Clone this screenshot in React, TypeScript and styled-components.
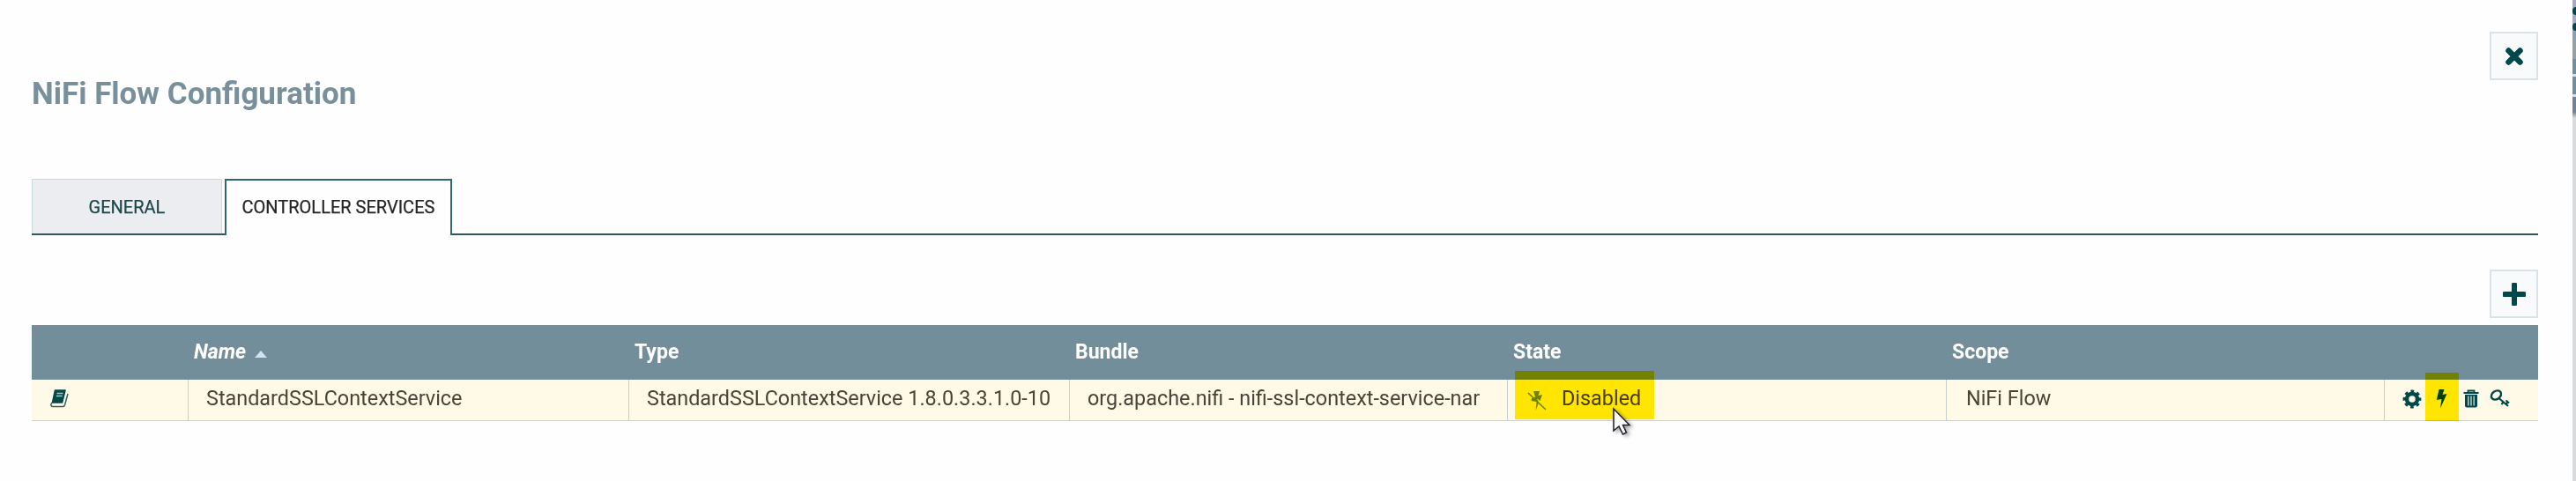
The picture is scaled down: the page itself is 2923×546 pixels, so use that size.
import React from 'react';
import styled, { createGlobalStyle, css } from 'styled-components';

const Global = createGlobalStyle`
  * { box-sizing: border-box; }
  body { margin: 0; background: #fefefe; font-family: Roboto, "Liberation Sans", sans-serif; }
`;

const Page = styled.div`
  position: relative;
  width: 2923px;
  height: 546px;
  overflow: hidden;
  display: flex;
`;

const Dialog = styled.main`
  flex: 1;
  padding: 36px 39px 0 36px;
  display: flex;
  flex-direction: column;
`;

const TitleBar = styled.header`
  display: flex;
  justify-content: space-between;
  align-items: flex-start;
  height: 167px;
`;

const Title = styled.h1`
  margin: 50px 0 0;
  font-size: 35px;
  line-height: 42px;
  font-weight: 700;
  color: #788f9c;
  white-space: nowrap;
`;

const IconButton = styled.button`
  width: 55px;
  height: 55px;
  padding: 0;
  display: flex;
  align-items: center;
  justify-content: center;
  background: #f9fafb;
  border: 2px solid #dae3e6;
  color: #004849;
`;

const Tabs = styled.nav`
  display: flex;
  gap: 3px;
  height: 64px;
  border-bottom: 2px solid #33565b;
`;

const Tab = styled.div<{ $active?: boolean; $width: number }>`
  width: ${p => p.$width}px;
  height: 62px;
  line-height: 63px;
  text-align: center;
  font-size: 20px;
  white-space: nowrap;
  background: #ebedf0;
  border: 1px solid #c9d9dd;
  border-bottom: 0;
  color: #1f484b;
  -webkit-text-stroke: 0.25px currentColor;
  ${p => p.$active && css`
    height: 64px;
    line-height: 61px;
    background: #fefefe;
    border: 2px solid #33666a;
    border-bottom: 0;
    color: #262626;
  `}
`;

const Toolbar = styled.div`
  display: flex;
  justify-content: flex-end;
  padding: 39px 0 8px;
`;

const columns = '178px 500px 500px 497px 498px 497px 174px';

const HeadRow = styled.div`
  display: grid;
  grid-template-columns: ${columns};
  height: 62px;
  background: #728e9b;
  color: #fff;
`;

const HeadCell = styled.div<{ $sorted?: boolean }>`
  display: flex;
  align-items: center;
  gap: 10px;
  padding: 0 0 0 6px;
  font-size: 23px;
  font-weight: 700;
  line-height: 62px;
  font-style: ${p => (p.$sorted ? 'italic' : 'normal')};
`;

const SortArrow = styled.span`
  margin-top: 4px;
  border: 7px solid transparent;
  border-top: 0;
  border-bottom: 8px solid #cfe3f3;
`;

const Row = styled.div`
  display: grid;
  grid-template-columns: ${columns};
  height: 47px;
  background: #fffae8;
  border-bottom: 1px solid #c7d2d7;
`;

const Cell = styled.div<{ $pad?: number }>`
  display: flex;
  align-items: center;
  padding: 0 0 4px ${p => p.$pad ?? 20}px;
  border-right: 1px solid #c7cdcd;
  font-size: 23.4px;
  color: #4a4338;
  white-space: nowrap;
`;

const StateIcon = styled.span`
  display: flex;
  margin: 6px 17px 0 0;
`;

const Actions = styled.div`
  display: flex;
  align-items: center;
  padding: 0 0 2px 20px;
  color: #004849;
`;

const Glyph = styled.svg<{ $gap?: number }>`
  display: block;
  flex: none;
  margin-left: ${p => p.$gap ?? 0}px;
`;

const Marker = styled.div<{ $x: number; $y: number; $w: number; $h: number }>`
  position: absolute;
  left: ${p => p.$x}px;
  top: ${p => p.$y}px;
  width: ${p => p.$w}px;
  height: ${p => p.$h}px;
  background: #ffea00;
  mix-blend-mode: multiply;
`;

const Pointer = styled.svg`
  position: absolute;
  left: 1829px;
  top: 462px;
  filter: drop-shadow(3px 2px 2px rgba(0, 0, 0, 0.35));
`;

const CanvasEdge = styled.aside`
  width: 4px;
  background: linear-gradient(
    #a7a9c6 0 32px, #8ba0b0 32px 45px, #93a2a9 45px 67px, #728e9b 67px 84px, #d3e2e8 84px 87px,
    #728e9b 87px 107px, #d3e2e8 107px 110px, #728291 110px 127px, #d9dadd 134px 100%
  );
`;

const EdgeDot = styled.div`
  height: 9px;
  margin-bottom: 9px;
  border-radius: 5px 0 0 5px;
  background: #004849;
  &:first-child { margin-top: 8px; }
`;

export default function App() {
  return (
    <>
      <Global />
      <Page>
        <Dialog>
          <TitleBar>
            <Title>NiFi Flow Configuration</Title>
            <IconButton aria-label="Close">
              <svg width="22" height="22" viewBox="0 0 22 22">
                <path d="M4.5 4.5 17.5 17.5M17.5 4.5 4.5 17.5" stroke="currentColor" strokeWidth="6.5" strokeLinecap="round" />
              </svg>
            </IconButton>
          </TitleBar>
          <Tabs>
            <Tab $width={216}>GENERAL</Tab>
            <Tab $width={258} $active>CONTROLLER SERVICES</Tab>
          </Tabs>
          <Toolbar>
            <IconButton aria-label="Add">
              <svg width="26" height="26" viewBox="0 0 26 26">
                <path d="M13 2V24M2 13H24" stroke="currentColor" strokeWidth="6" strokeLinecap="round" />
              </svg>
            </IconButton>
          </Toolbar>
          <HeadRow>
            <HeadCell />
            <HeadCell $sorted>Name<SortArrow /></HeadCell>
            <HeadCell>Type</HeadCell>
            <HeadCell>Bundle</HeadCell>
            <HeadCell>State</HeadCell>
            <HeadCell>Scope</HeadCell>
            <HeadCell />
          </HeadRow>
          <Row>
            <Cell>
              <Glyph width="22" height="21" viewBox="0 0 22 21">
                <path d="M6.5 1H18L14.5 15H3.5Z" fill="#004849" stroke="#004849" strokeWidth="1.6" strokeLinejoin="round" />
                <path d="M8.500 4.5H15.5M7.8 7.5H14.8" stroke="#a9c4c1" strokeWidth="1.6" />
                <path d="M3 15C1 17.5 2 19.5 4 19.5H15.5C17 19.5 17.3 18.5 17.6 17.5L21 5" fill="none" stroke="#34605f" strokeWidth="1.5" />
              </Glyph>
            </Cell>
            <Cell>StandardSSLContextService</Cell>
            <Cell>StandardSSLContextService 1.8.0.3.3.1.0-10</Cell>
            <Cell>org.apache.nifi - nifi-ssl-context-service-nar</Cell>
            <Cell $pad={22}>
              <StateIcon>
                <Glyph width="22" height="24" viewBox="0 0 22 24">
                  <path d="M7 1H14L12.5 6 17 5 14.5 12 9 8ZM5 9 10 7.5 13 14 9.5 23 10.5 13 4.5 12Z" fill="#6f8f8e" />
                  <path d="M1 3 21 22" stroke="#6f8f8e" strokeWidth="1.6" />
                </Glyph>
              </StateIcon>
              Disabled
            </Cell>
            <Cell $pad={22}>NiFi Flow</Cell>
            <Actions>
              <Glyph width="22" height="22" viewBox="0 0 22 22">
                <circle cx="11" cy="11" r="6" fill="none" stroke="currentColor" strokeWidth="4.5" />
                <circle cx="11" cy="11" r="8.9" fill="none" stroke="currentColor" strokeWidth="3" strokeDasharray="3.7 3.29" strokeDashoffset="1.85" />
              </Glyph>
              <Glyph $gap={16} width="13" height="22" viewBox="0 0 13 22">
                <path d="M3.5 0H9.5L7.5 6 12.5 5 5 21.5 6.5 11 .8 12Z" fill="currentColor" />
              </Glyph>
              <Glyph $gap={18} width="18" height="22" viewBox="0 0 18 22">
                <path d="M5.5 3.5V1.5H12.5V3.5M.5 4H17.5" fill="none" stroke="currentColor" strokeWidth="1.8" />
                <path d="M2 6H16V18.5Q16 20.5 14 20.5H4Q2 20.5 2 18.5Z" fill="currentColor" />
                <path d="M5.8 7.5V18.5M9 7.5V18.5M12.2 7.5V18.5" stroke="#b9cbc4" strokeWidth="1.5" />
              </Glyph>
              <Glyph $gap={12} width="23" height="22" viewBox="0 0 23 22">
                <ellipse cx="7.5" cy="6.5" rx="6" ry="4.6" transform="rotate(-35 7.5 6.5)" fill="none" stroke="currentColor" strokeWidth="2.4" />
                <path d="M10.5 10 21 19M15.5 14.5 13.5 17M18.5 12.5 22 15.5M18.5 17 20.5 14.5" fill="none" stroke="currentColor" strokeWidth="2.2" />
              </Glyph>
            </Actions>
          </Row>
        </Dialog>
        <CanvasEdge><EdgeDot /><EdgeDot /></CanvasEdge>
        <Marker $x={1719} $y={421} $w={158} $h={55} />
        <Marker $x={2752} $y={423} $w={38} $h={55} />
        <Pointer width="24" height="34" viewBox="0 0 24 34">
          <path d="M2 2V27L8 22 12.5 31 16.5 29 12.5 20.5H20Z" fill="#fff" stroke="#1c1c2b" strokeWidth="1.5" />
        </Pointer>
      </Page>
    </>
  );
}
